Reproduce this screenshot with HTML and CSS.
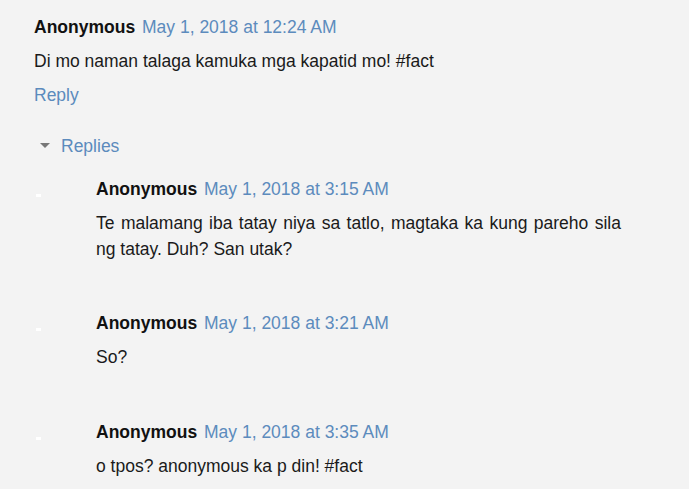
FILE: index.html
```html
<!DOCTYPE html>
<html lang="en">
<head>
    <meta charset="UTF-8">
    <meta name="viewport" content="width=device-width, initial-scale=1.0">
    <title>Comments</title>
    <link rel="stylesheet" href="styles.css">
</head>
<body>
    <div class="comments">
        <div class="comment">
            <div class="comment-header">
                <span class="user">Anonymous</span>
                <a class="date" href="#">May 1, 2018 at 12:24 AM</a>
            </div>
            <p class="comment-body">Di mo naman talaga kamuka mga kapatid mo! #fact</p>
            <a class="reply-link" href="#">Reply</a>
        </div>

        <div class="thread-toggle">
            <span class="arrow"></span>
            <a href="#">Replies</a>
        </div>

        <div class="thread">
            <div class="reply">
                <div class="avatar"><span></span></div>
                <div class="reply-content">
                    <div class="comment-header">
                        <span class="user">Anonymous</span>
                        <a class="date" href="#">May 1, 2018 at 3:15 AM</a>
                    </div>
                    <p class="comment-body">Te malamang iba tatay niya sa tatlo, magtaka ka kung pareho sila ng tatay. Duh? San utak?</p>
                </div>
            </div>
            <div class="reply">
                <div class="avatar"><span></span></div>
                <div class="reply-content">
                    <div class="comment-header">
                        <span class="user">Anonymous</span>
                        <a class="date" href="#">May 1, 2018 at 3:21 AM</a>
                    </div>
                    <p class="comment-body">So?</p>
                </div>
            </div>
            <div class="reply">
                <div class="avatar"><span></span></div>
                <div class="reply-content">
                    <div class="comment-header">
                        <span class="user">Anonymous</span>
                        <a class="date" href="#">May 1, 2018 at 3:35 AM</a>
                    </div>
                    <p class="comment-body">o tpos? anonymous ka p din! #fact</p>
                </div>
            </div>
        </div>
    </div>
</body>
</html>
```

FILE: styles.css
```css
body {
    margin: 0;
    background-color: #f3f3f3;
    color: #1a1a1a;
    font-family: 'Liberation Sans', Arial, sans-serif;
    font-size: 17.5px;
}
a {
    color: #5c8bbd;
    text-decoration: none;
}
.comments {
    width: 587px;
    padding: 14px 0 0 34px;
}
.comment-header {
    line-height: 26px;
}
.user {
    font-weight: bold;
    color: #111111;
    margin-right: 2px;
}
.comment-body {
    margin: 8px 0 0;
    line-height: 26px;
    text-align: justify;
}
.reply-link {
    display: block;
    margin-top: 8px;
    line-height: 26px;
}
.thread-toggle {
    display: flex;
    align-items: center;
    margin-top: 25px;
    padding-left: 6px;
    line-height: 26px;
}
.arrow {
    width: 0;
    height: 0;
    border-left: 5px solid transparent;
    border-right: 5px solid transparent;
    border-top: 5px solid #777777;
    margin-right: 11px;
    margin-top: -2px;
}
.thread {
    margin-top: 17px;
    display: flex;
    flex-direction: column;
    gap: 48px;
}
.reply {
    display: flex;
}
.reply:last-child {
    margin-top: 1px;
}
.avatar {
    width: 62px;
    flex-shrink: 0;
}
.avatar span {
    display: block;
    width: 5px;
    height: 3px;
    margin: 18px 0 0 2px;
    background-color: #ffffff;
}
.reply-content {
    flex: 1;
}
```
